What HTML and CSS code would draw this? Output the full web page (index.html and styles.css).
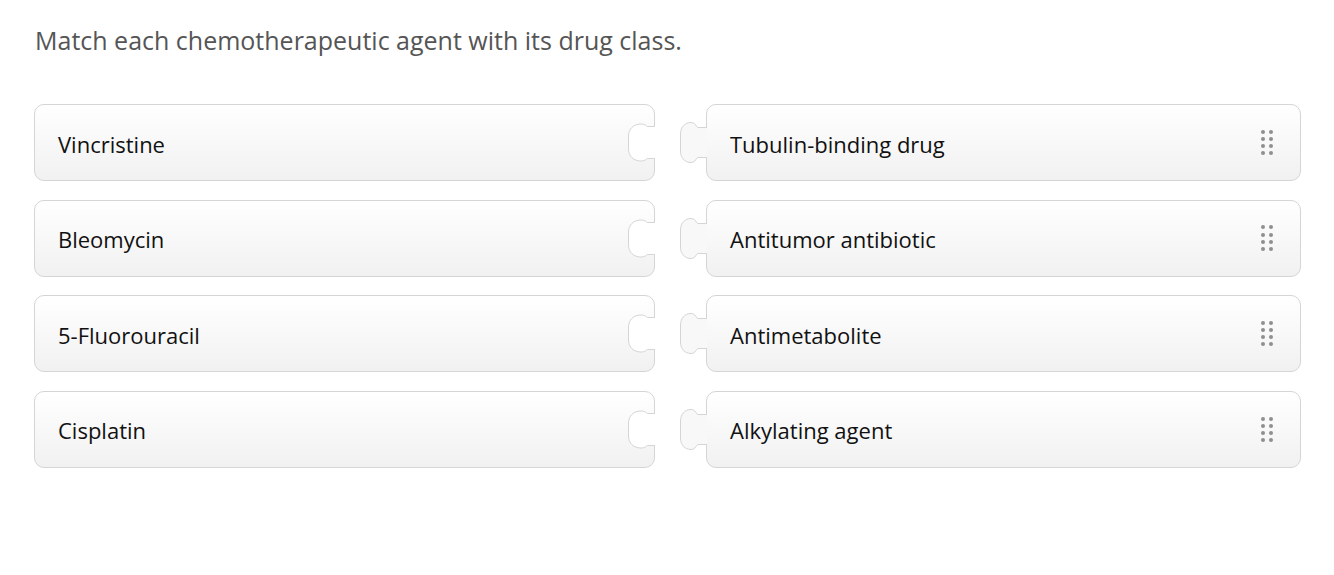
FILE: index.html
```html
<!DOCTYPE html>
<html>
<head>
<meta charset="utf-8">
<link rel="stylesheet" href="styles.css">
</head>
<body>
<div class="page">
  <p class="prompt">Match each chemotherapeutic agent with its drug class.</p>
  <div class="board">
    <div class="col">
      <div class="card left"><span>Vincristine</span><svg class="notch" width="30" height="50" viewBox="0 0 30 50"><path d="M30,7.5 H23 C21,7.5 21,5 16,5 C8.5,5 3.5,10 3.5,17 V30 C3.5,37 8.5,42 16,42 C21,42 21,39.5 23,39.5 H30"/></svg></div>
      <div class="card left"><span>Bleomycin</span><svg class="notch" width="30" height="50" viewBox="0 0 30 50"><path d="M30,7.5 H23 C21,7.5 21,5 16,5 C8.5,5 3.5,10 3.5,17 V30 C3.5,37 8.5,42 16,42 C21,42 21,39.5 23,39.5 H30"/></svg></div>
      <div class="card left"><span>5-Fluorouracil</span><svg class="notch" width="30" height="50" viewBox="0 0 30 50"><path d="M30,7.5 H23 C21,7.5 21,5 16,5 C8.5,5 3.5,10 3.5,17 V30 C3.5,37 8.5,42 16,42 C21,42 21,39.5 23,39.5 H30"/></svg></div>
      <div class="card left"><span>Cisplatin</span><svg class="notch" width="30" height="50" viewBox="0 0 30 50"><path d="M30,7.5 H23 C21,7.5 21,5 16,5 C8.5,5 3.5,10 3.5,17 V30 C3.5,37 8.5,42 16,42 C21,42 21,39.5 23,39.5 H30"/></svg></div>
    </div>
    <div class="col right-col">
      <div class="card right"><svg class="knob" width="28" height="50" viewBox="0 0 28 50"><path d="M28,8.5 H19 C17,8.5 17,3.5 12,3.5 C5.5,3.5 1.5,8.5 1.5,15 V32 C1.5,38.5 5.5,43.5 12,43.5 C17,43.5 17,38.5 19,38.5 H28"/></svg><span>Tubulin-binding drug</span><span class="handle"><i></i><i></i><i></i><i></i><i></i><i></i><i></i><i></i></span></div>
      <div class="card right"><svg class="knob" width="28" height="50" viewBox="0 0 28 50"><path d="M28,8.5 H19 C17,8.5 17,3.5 12,3.5 C5.5,3.5 1.5,8.5 1.5,15 V32 C1.5,38.5 5.5,43.5 12,43.5 C17,43.5 17,38.5 19,38.5 H28"/></svg><span>Antitumor antibiotic</span><span class="handle"><i></i><i></i><i></i><i></i><i></i><i></i><i></i><i></i></span></div>
      <div class="card right"><svg class="knob" width="28" height="50" viewBox="0 0 28 50"><path d="M28,8.5 H19 C17,8.5 17,3.5 12,3.5 C5.5,3.5 1.5,8.5 1.5,15 V32 C1.5,38.5 5.5,43.5 12,43.5 C17,43.5 17,38.5 19,38.5 H28"/></svg><span>Antimetabolite</span><span class="handle"><i></i><i></i><i></i><i></i><i></i><i></i><i></i><i></i></span></div>
      <div class="card right"><svg class="knob" width="28" height="50" viewBox="0 0 28 50"><path d="M28,8.5 H19 C17,8.5 17,3.5 12,3.5 C5.5,3.5 1.5,8.5 1.5,15 V32 C1.5,38.5 5.5,43.5 12,43.5 C17,43.5 17,38.5 19,38.5 H28"/></svg><span>Alkylating agent</span><span class="handle"><i></i><i></i><i></i><i></i><i></i><i></i><i></i><i></i></span></div>
    </div>
  </div>
</div>
</body>
</html>
```

FILE: styles.css
```css
html, body {
  margin: 0;
  padding: 0;
  background: #ffffff;
}

.page {
  padding: 24px 33px 0 34px;
  font-family: "Open Sans", "Noto Sans", sans-serif;
}

.prompt {
  margin: 0 0 48px 1px;
  font-size: 25px;
  line-height: 32px;
  color: #555555;
}

.board {
  display: grid;
  grid-template-columns: 621px 621px;
  column-gap: 25px;
}

.col {
  display: flex;
  flex-direction: column;
  gap: 18.6px;
}

.right-col {
  padding-left: 26px;
}

.card {
  position: relative;
  box-sizing: border-box;
  height: 77px;
  display: flex;
  align-items: center;
  padding: 0 27px 0 23px;
  border: 1px solid #d5d5d5;
  border-radius: 10px;
  background: linear-gradient(#ffffff, #f1f1f1);
  font-size: 22px;
  color: #111111;
}

.card span:first-of-type {
  flex: 1;
  padding-top: 2px;
}

.notch {
  position: absolute;
  right: -1px;
  top: 14px;
  overflow: visible;
}

.notch path {
  fill: #ffffff;
  stroke: #d5d5d5;
  stroke-width: 1;
}

.knob {
  position: absolute;
  left: -28px;
  top: 14px;
  overflow: visible;
}

.knob path {
  fill: #f8f8f8;
  stroke: #d5d5d5;
  stroke-width: 1;
}

.handle {
  display: grid;
  grid-template-columns: 4px 4px;
  grid-auto-rows: 4px;
  column-gap: 4px;
  row-gap: 3.2px;
}

.handle i {
  display: block;
  width: 4px;
  height: 4px;
  border-radius: 50%;
  background: #8f8f8f;
}
```
